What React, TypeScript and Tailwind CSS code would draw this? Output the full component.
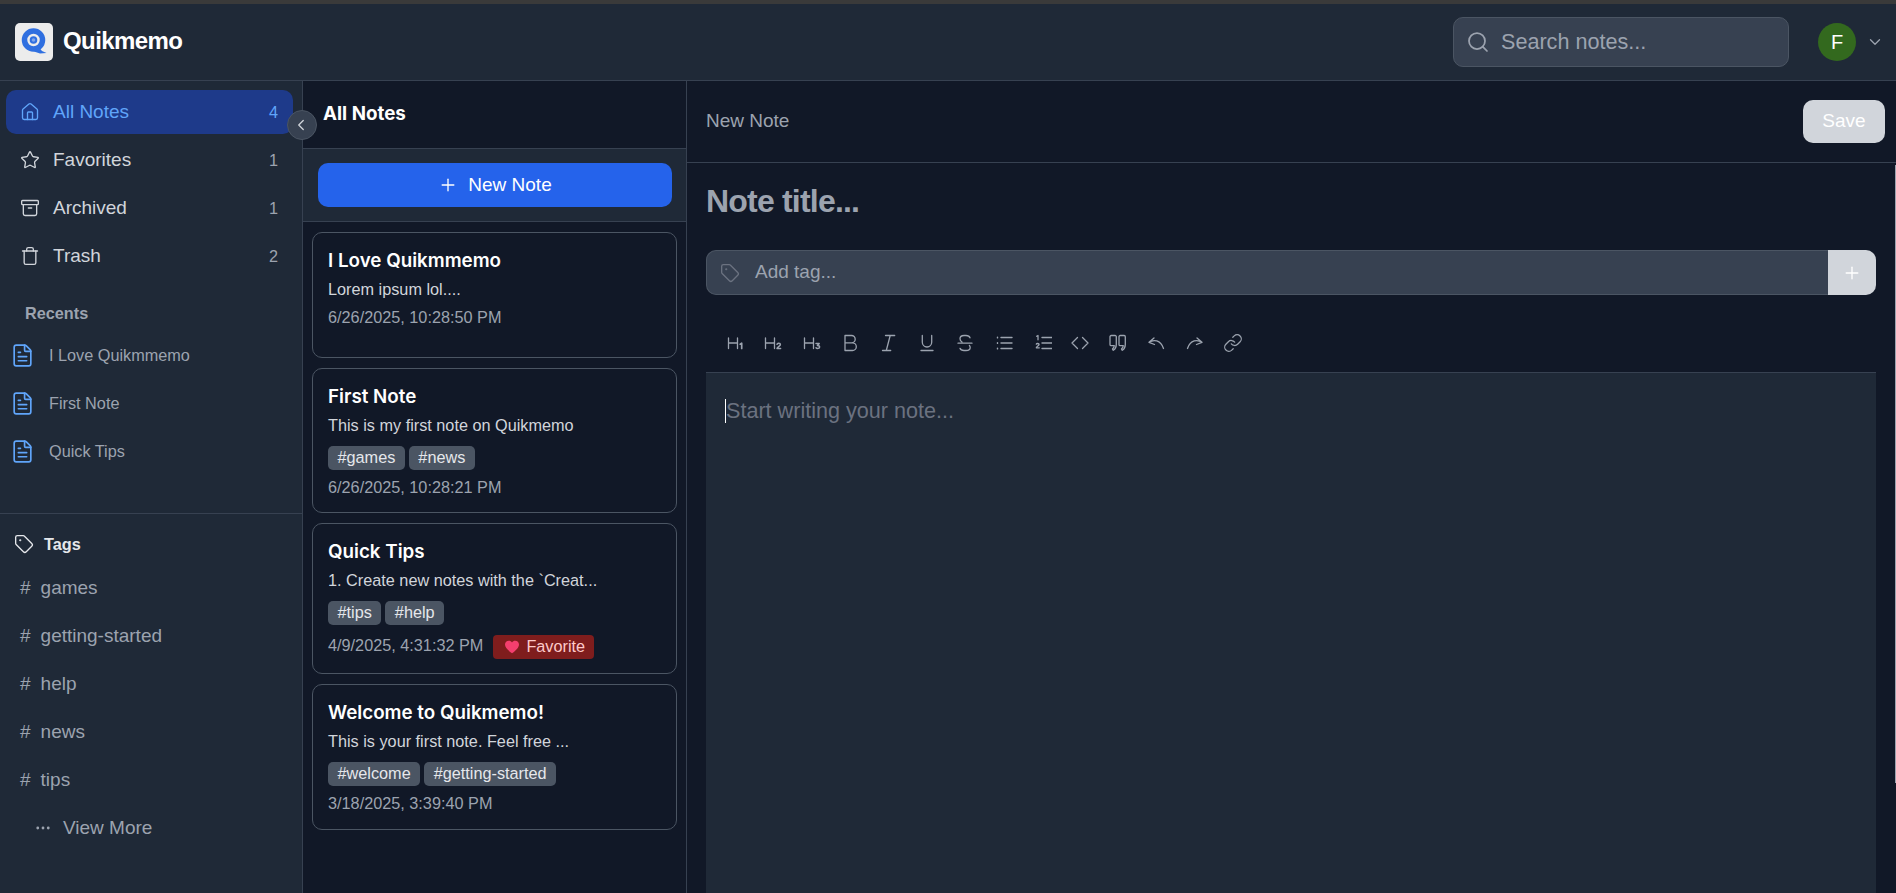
import React from 'react';
import {
  Archive,
  ChevronDown,
  ChevronLeft,
  Ellipsis,
  FileText,
  Home,
  Link,
  Plus,
  Search,
  Star,
  Tag,
  Trash,
} from 'lucide-react';

const navItems = [
  { label: 'All Notes', count: 4, icon: Home, active: true },
  { label: 'Favorites', count: 1, icon: Star },
  { label: 'Archived', count: 1, icon: Archive },
  { label: 'Trash', count: 2, icon: Trash },
];

const recents = ['I Love Quikmmemo', 'First Note', 'Quick Tips'];
const tags = ['games', 'getting-started', 'help', 'news', 'tips'];

const notes = [
  {
    title: 'I Love Quikmmemo',
    body: 'Lorem ipsum lol....',
    tags: [] as string[],
    date: '6/26/2025, 10:28:50 PM',
    height: 'h-[126px]',
  },
  {
    title: 'First Note',
    body: 'This is my first note on Quikmemo',
    tags: ['games', 'news'],
    date: '6/26/2025, 10:28:21 PM',
    height: 'h-[145px]',
  },
  {
    title: 'Quick Tips',
    body: '1. Create new notes with the `Creat...',
    tags: ['tips', 'help'],
    date: '4/9/2025, 4:31:32 PM',
    favorite: true,
    height: 'h-[151px]',
  },
  {
    title: 'Welcome to Quikmemo!',
    body: 'This is your first note. Feel free ...',
    tags: ['welcome', 'getting-started'],
    date: '3/18/2025, 3:39:40 PM',
    height: 'h-[146px]',
  },
];

// editor toolbar glyphs, drawn on a 20x20 grid
const toolIcons: React.ReactNode[] = [
  <>
    <path d="M3.5 5v10.5M12.5 5v10.5M3.5 10h9" />
    <path d="M15.2 11.2l1.5-1v5.3" strokeWidth="1.7" />
  </>,
  <>
    <path d="M2.5 5v10.5M11.5 5v10.5M2.5 10h9" />
    <path d="M14 11.3c.3-1.4 3.4-1.4 3.4.4 0 1.3-3.4 2-3.4 3.8h3.6" strokeWidth="1.5" />
  </>,
  <>
    <path d="M2.5 5v10.5M11.5 5v10.5M2.5 10h9" />
    <path d="M14 10.4h3.2l-1.8 2c1.5 0 2.2.6 2.2 1.5 0 1.6-2.6 2-3.6.9" strokeWidth="1.5" />
  </>,
  <path d="M5 2.5h6.5a3.7 3.7 0 0 1 0 7.4H5zM5 9.9h7.5a3.8 3.8 0 0 1 0 7.6H5z" />,
  <path d="M7.5 2.5h9.2M12.2 2.5L8.3 17.5M4.5 17.5h8.2" />,
  <path d="M5.3 2.5v6.8a4.7 4.7 0 0 0 9.4 0V2.5M4 17.5h12" />,
  <path d="M15 4.8c-.5-1.5-2-2.3-4-2.3H9C6.6 2.5 5 4 5 5.8c0 1.500.8 2.600 2 3.200M3 10.200h14M14.400 12.500c.5.6.8 1.200.8 1.900 0 1.900-1.700 3.100-4.200 3.100H9c-2 0-3.500-.8-4-2.200" />,
  <path d="M4.500 4.100v.8M4.500 9.600v.8M4.500 15.100v.8M8 4.500h11M8 10h11M8 15.500h11" strokeWidth="1.400" />,
  <>
    <path d="M10 4.500h10M10 10h10M10 15.500h10" strokeWidth="1.400" />
    <path d="M4.600 3.300l1.400-.8v4.300M4.300 11.200c.3-1 2.800-1 2.800.4 0 1.100-2.800 1.700-2.800 3.200h3" strokeWidth="1.300" />
  </>,
  <path d="M7.500 4.500L2 10l5.500 5.500M12.500 4.500L18 10l-5.500 5.500" />,
  <>
    <path d="M3.200 2.500h3.900a1.200 1.200 0 0 1 1.200 1.200v7.800c0 2.700-1 4.500-3 5.800l-.9-1.300c1.300-.9 1.900-2 1.900-3.400H3.200A1.200 1.200 0 0 1 2 11.400V3.700a1.200 1.200 0 0 1 1.200-1.200z" />
    <path d="M12.200 2.500h3.900a1.200 1.200 0 0 1 1.200 1.200v7.800c0 2.700-1 4.500-3 5.800l-.9-1.300c1.300-.9 1.900-2 1.900-3.400h-3.100A1.200 1.200 0 0 1 11 11.400V3.700a1.200 1.200 0 0 1 1.200-1.200z" />
  </>,
  <path d="M8 5L3 9.300l5.500 2.200M3 9.300c4.500-3 11.500-2.700 14.500 6.200" />,
  <path d="M12 5l5 4.300-5.500 2.200M17 9.300c-4.500-3-11.500-2.700-14.500 6.200" />,
];

const Logo = () => (
  <svg width="38" height="38" viewBox="0 0 38 38" className="shrink-0">
    <rect width="38" height="38" rx="5" fill="#ececec" />
    <circle cx="18.500" cy="17" r="9" fill="none" stroke="#2f6fe0" strokeWidth="5.500" />
    <circle cx="18.500" cy="17" r="3.800" fill="#2f6fe0" />
    <circle cx="18.500" cy="17" r="1.800" fill="#7ea6ec" />
    <path d="M24 24.500 L27 28 L31.500 30 L25 30.500 L19 28.500 Z" fill="#2f6fe0" />
  </svg>
);

const NoteCard = ({ note }: { note: (typeof notes)[number] }) => (
  <div className={`${note.height} rounded-[10px] border border-[#4b5563] bg-[#111827] px-[15px] pt-[16px]`}>
    <h3 className="font-['Inter',sans-serif] text-[18.8px] font-semibold leading-[24px] text-white">{note.title}</h3>
    <p className="mt-[4px] text-[16.25px] leading-[24px] text-[#d1d5db]">{note.body}</p>
    {note.tags.length > 0 && (
      <div className="mt-[9px] flex gap-[4px]">
        {note.tags.map((tag) => (
          <span key={tag} className="h-[24px] rounded-[5px] bg-[#4b5563] px-[9.5px] text-[16.25px] leading-[23px] text-[#e5e7eb]">
            #{tag}
          </span>
        ))}
      </div>
    )}
    <div className={`flex items-start gap-[10px] ${note.favorite ? 'mt-[10px]' : note.tags.length > 0 ? 'mt-[7px]' : 'mt-[6px]'}`}>
      <span className="text-[16.25px] leading-[20px] text-[#9ca3af]">{note.date}</span>
      {note.favorite && (
        <span className="flex h-[24px] items-center gap-[6px] rounded-[4px] bg-[#7f1d1d] pb-[1px] pl-[11px] pr-[9px] text-[16.25px] text-[#fecaca]">
          <svg width="16" height="14" viewBox="0 0 24 22" fill="#f43f6e">
            <path d="M12 21 C5 15.500 1 11.500 1 7 C1 3.500 3.700 1 7 1 C9 1 11 2 12 4 C13 2 15 1 17 1 C20.300 1 23 3.500 23 7 C23 11.500 19 15.500 12 21 Z" />
          </svg>
          Favorite
        </span>
      )}
    </div>
  </div>
);

export default function App() {
  return (
    <div className="flex h-screen w-full flex-col overflow-hidden bg-[#111827] font-['Liberation_Sans',Arial,sans-serif]">
      <div className="h-[4px] shrink-0 bg-[#3a3a3a]" />

      {/* Header */}
      <header className="flex h-[77px] shrink-0 items-center border-b border-[#374151] bg-[#1f2937] pb-[1px] pl-[15px]">
        <Logo />
        <span className="mb-[2px] ml-[10px] text-[24px] font-bold tracking-tight text-white">Quikmemo</span>
        <div className="ml-auto flex h-[50px] w-[336px] items-center gap-[11px] rounded-[10px] border border-[#4b5563] bg-[#374151] pl-[12px]">
          <Search size={24} strokeWidth={1.75} className="text-[#9ca3af]" />
          <span className="pt-[1px] text-[21.6px] text-[#9ca3af]">Search notes...</span>
        </div>
        <div className="ml-[29px] flex h-[38px] w-[38px] items-center justify-center rounded-full bg-[#33691e] text-[20px] text-white">
          F
        </div>
        <ChevronDown size={18} strokeWidth={1.75} className="ml-[10px] mr-[12px] text-[#9ca3af]" />
      </header>

      <div className="relative flex min-h-0 flex-1">
        {/* Sidebar */}
        <aside className="relative w-[303px] shrink-0 border-r border-[#374151] bg-[#1f2937]">
          <nav className="flex flex-col gap-[4px] pl-[6px] pr-[9px] pt-[9px]">
            {navItems.map((item) => (
              <div
                key={item.label}
                className={`flex h-[44px] items-center rounded-[10px] pl-[14px] pr-[15px] text-[19px] ${
                  item.active ? 'bg-[#1e3a8a] text-[#60a5fa]' : 'text-[#d1d5db]'
                }`}
              >
                <item.icon size={20} strokeWidth={1.6} />
                <span className="ml-[13px] flex-1">{item.label}</span>
                <span className={`text-[16.25px] ${item.active ? 'text-[#60a5fa]' : 'text-[#9ca3af]'}`}>{item.count}</span>
              </div>
            ))}
          </nav>

          <div className="mt-[25px] pl-[25px] text-[16.25px] font-bold leading-[20px] text-[#9ca3af]">Recents</div>
          <div className="mt-[10px] flex flex-col gap-[4px] pl-[10px]">
            {recents.map((name) => (
              <div key={name} className="flex h-[44px] items-center gap-[14px] text-[16.25px] text-[#9ca3af]">
                <FileText size={25} strokeWidth={1.6} className="text-[#60a5fa]" />
                {name}
              </div>
            ))}
          </div>

          <div className="mt-[40px] border-t border-[#374151] pl-[14px] pt-[18px]">
            <div className="flex h-[24px] items-center gap-[10px] text-[16.25px] font-bold text-[#e5e7eb]">
              <Tag size={20} strokeWidth={1.6} />
              Tags
            </div>
          </div>
          <div className="mt-[10px] flex flex-col gap-[4px] pl-[20px]">
            {tags.map((tag) => (
              <div key={tag} className="flex h-[44px] items-center gap-[10px] text-[19px] text-[#9ca3af]">
                <span>#</span>
                {tag}
              </div>
            ))}
            <div className="flex h-[44px] items-center gap-[11px] pl-[14px] text-[19px] text-[#9ca3af]">
              <Ellipsis size={18} strokeWidth={1.75} />
              View More
            </div>
          </div>

          <button className="absolute right-[-15px] top-[29px] z-10 flex h-[30px] w-[30px] items-center justify-center rounded-full border border-[#4b5563] bg-[#374151] pr-[2px] text-[#d1d5db]">
            <ChevronLeft size={18} strokeWidth={1.75} />
          </button>
        </aside>

        {/* Notes list */}
        <section className="flex w-[384px] shrink-0 flex-col border-r border-[#374151] bg-[#111827]">
          <div className="flex h-[68px] shrink-0 items-center border-b border-[#374151] pb-[1px] pl-[20px] font-['Inter',sans-serif] text-[18.8px] font-bold text-white">
            All Notes
          </div>
          <div className="flex h-[73px] shrink-0 items-center border-b border-[#374151] bg-[#1f2937] pl-[15px] pr-[14px]">
            <button className="flex h-[44px] w-full items-center justify-center gap-[10px] rounded-[10px] bg-[#2563eb] text-[19px] text-white">
              <Plus size={20} strokeWidth={1.6} />
              New Note
            </button>
          </div>
          <div className="flex flex-col gap-[10px] px-[9px] pt-[10px]">
            {notes.map((note) => (
              <NoteCard key={note.title} note={note} />
            ))}
          </div>
        </section>

        {/* Editor */}
        <main className="relative flex min-w-0 flex-1 flex-col">
          <div className="flex h-[82px] shrink-0 items-center justify-between border-b border-[#374151] pl-[19px] pr-[11px]">
            <span className="text-[19px] text-[#9ca3af]">New Note</span>
            <button className="h-[43px] w-[82px] rounded-[10px] bg-[#d1d5db] text-[19px] font-medium text-white">Save</button>
          </div>
          <div className="flex min-h-0 flex-1 flex-col pl-[19px] pr-[20px]">
            <h1 className="mt-[20px] h-[36px] text-[32px] font-bold leading-[36px] tracking-[-0.025em] text-[#9ca3af]">Note title...</h1>
            <div className="mt-[31px] flex h-[45px] shrink-0">
              <div className="flex flex-1 items-center gap-[15px] rounded-l-[10px] border border-r-0 border-[#4b5563] bg-[#374151] pl-[13px]">
                <Tag size={20} strokeWidth={1.6} className="text-[#6b7280]" />
                <span className="text-[19px] text-[#9ca3af]">Add tag...</span>
              </div>
              <div className="flex w-[48px] items-center justify-center rounded-r-[10px] bg-[#d1d5db] text-white">
                <Plus size={20} strokeWidth={1.6} />
              </div>
            </div>
            <div className="flex h-[77px] shrink-0 items-center pl-[10px] pt-[19px] text-[#9ca3af]">
              {toolIcons.map((icon, i) => (
                <span key={i} className="flex w-[38.3px] justify-center">
                  <svg width="20" height="20" viewBox="0 0 20 20" fill="none" stroke="currentColor" strokeWidth="1.300" strokeLinecap="round" strokeLinejoin="round">
                    {icon}
                  </svg>
                </span>
              ))}
              <span className="flex w-[38.3px] justify-center">
                <Link size={20} strokeWidth={1.5} />
              </span>
            </div>
            <div className="min-h-0 flex-1 border-t border-[#374151] bg-[#1f2937] px-[19px] pt-[26px]">
              <div className="flex h-[24px] items-center border-l border-white text-[21.6px] text-[#6b7280]">Start writing your note...</div>
            </div>
          </div>
          <div className="absolute right-0 top-[84px] h-[618px] w-[1px] bg-[#9ca3af]" />
        </main>
      </div>
    </div>
  );
}
